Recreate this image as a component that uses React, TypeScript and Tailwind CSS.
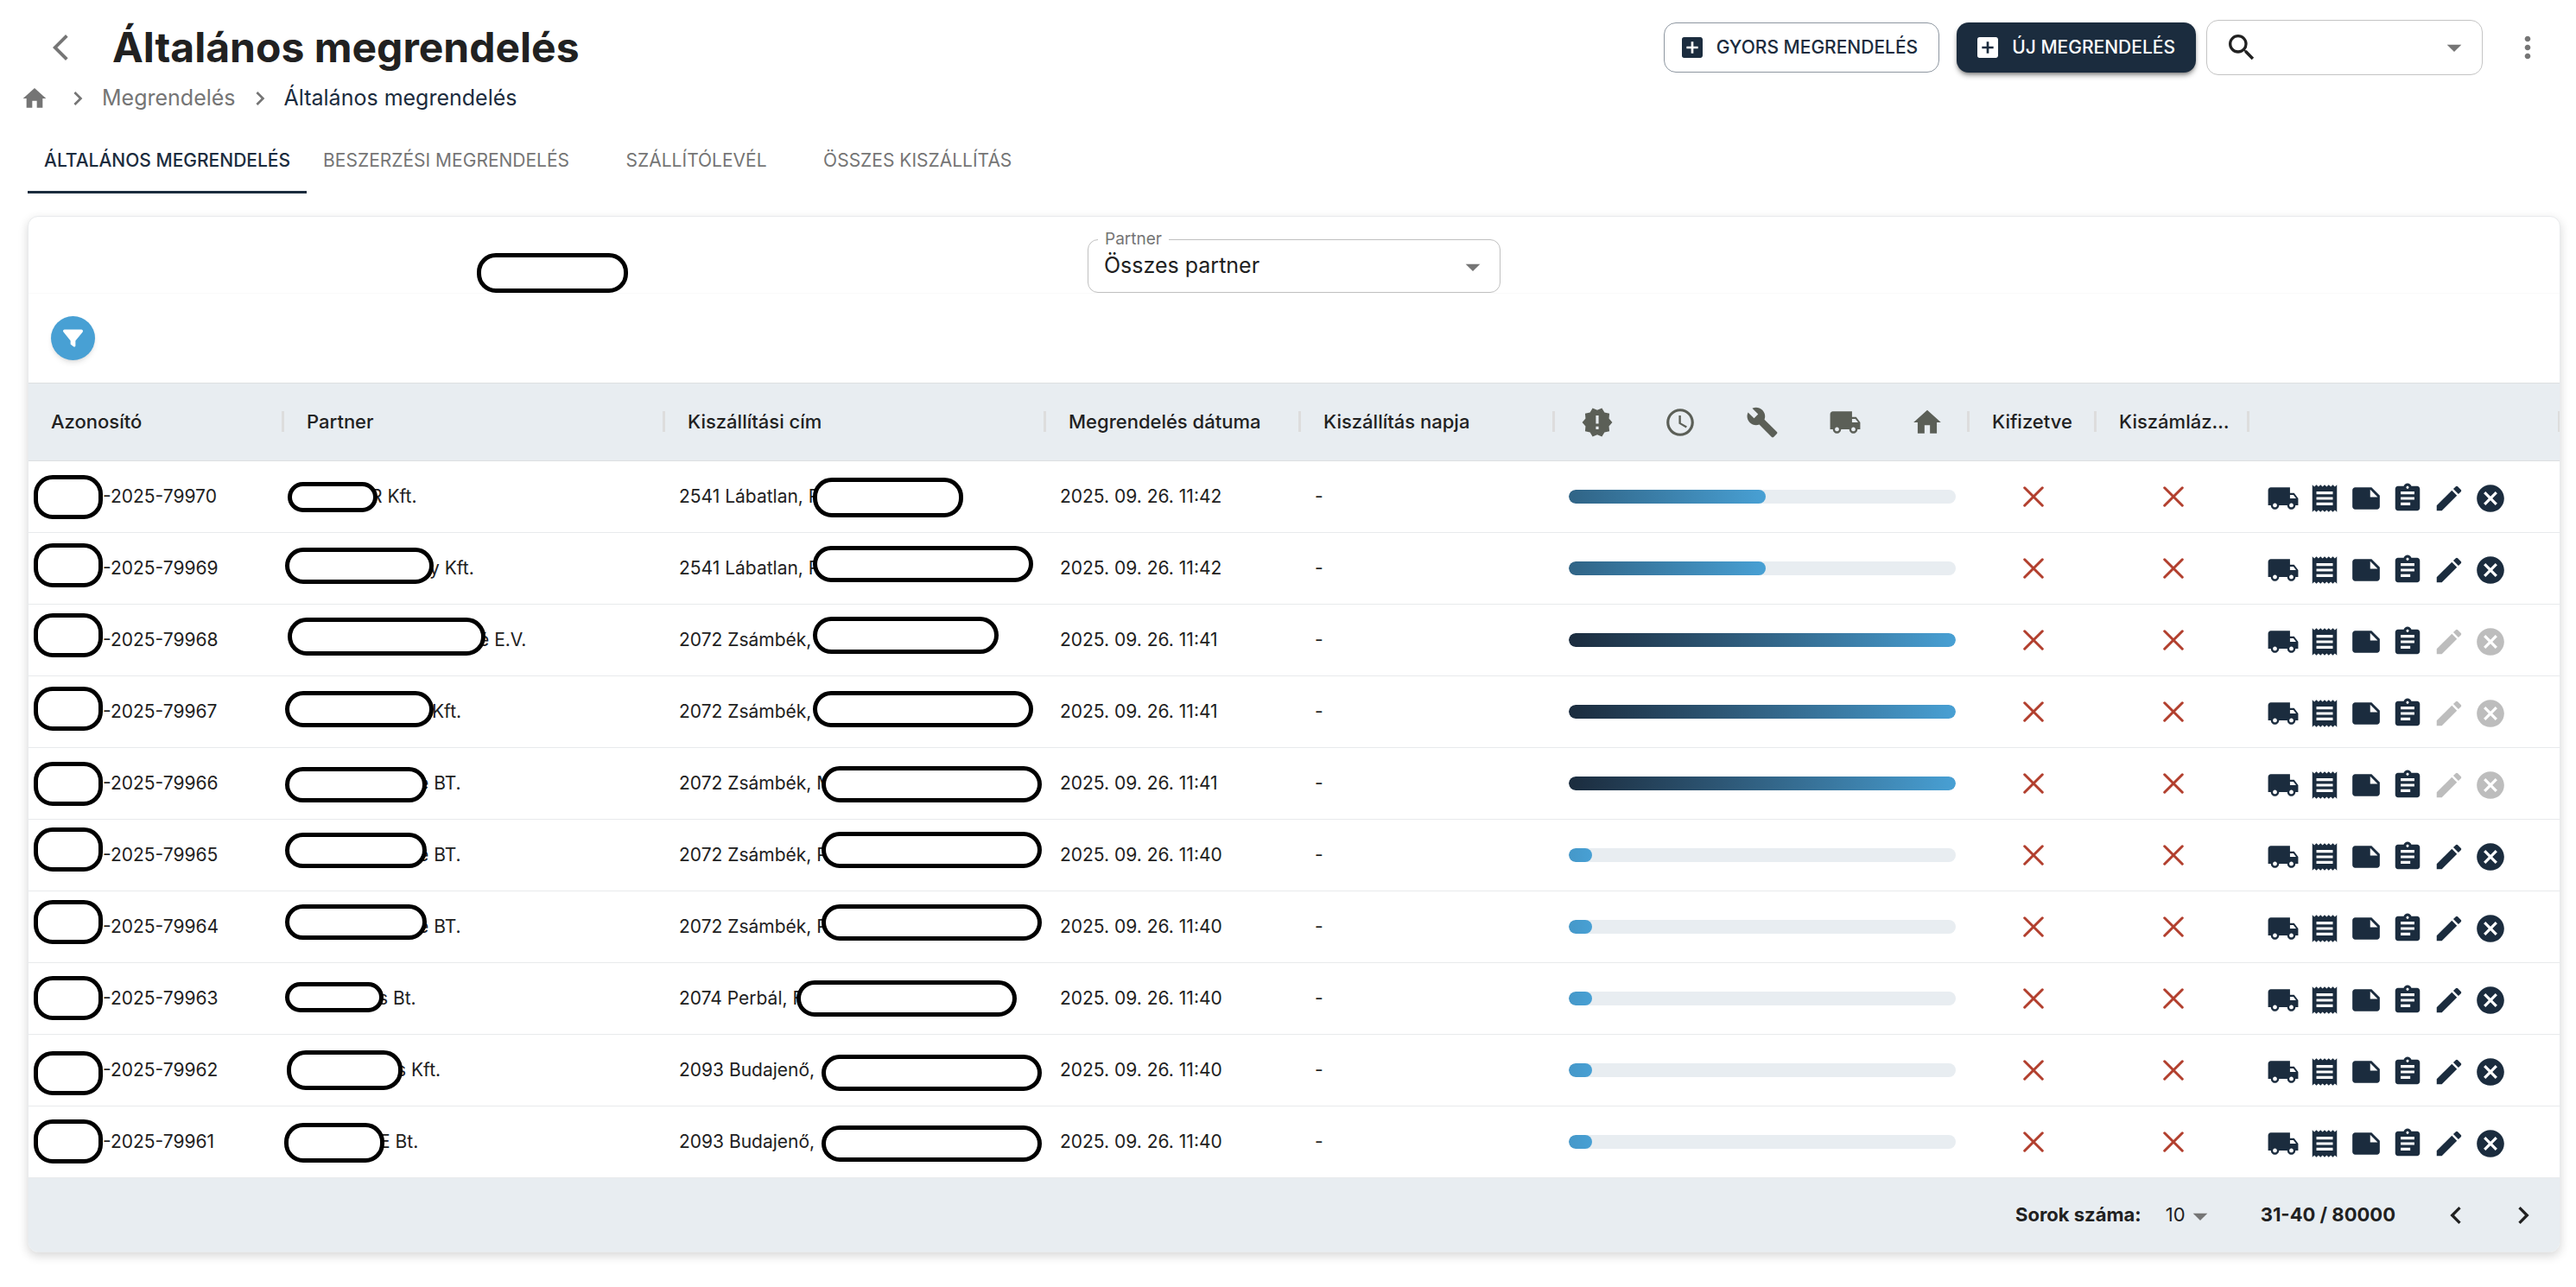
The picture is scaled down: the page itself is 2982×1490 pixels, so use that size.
import React, { useState } from "react";
import {
  MdAccessTime,
  MdAddBox,
  MdArrowBackIosNew,
  MdArrowDropDown,
  MdAssignment,
  MdBuild,
  MdCancel,
  MdChevronLeft,
  MdChevronRight,
  MdEdit,
  MdHome,
  MdLocalShipping,
  MdMoreVert,
  MdNewReleases,
  MdNote,
  MdReceipt,
  MdSearch,
} from "react-icons/md";
import { FaFilter } from "react-icons/fa6";
import clsx from "clsx";

type Mask = { x: number; y: number; w: number; h: number };

type Order = {
  id: string;
  idMaskY: number;
  partner: string;
  partnerX: number;
  partnerMask: Mask;
  address: string;
  addressMask: Mask;
  date: string;
  progress: number;
  locked?: boolean;
};

const ORDERS: Order[] = [
  { id: "-2025-79970", idMaskY: 16, partner: "R Kft.", partnerX: 97, partnerMask: { x: 4, y: 24, w: 104, h: 35 }, address: "2541 Lábatlan, R", addressMask: { x: 171, y: 19, w: 174, h: 46 }, date: "2025. 09. 26. 11:42", progress: 51 },
  { id: "-2025-79969", idMaskY: 12, partner: "y Kft.", partnerX: 165, partnerMask: { x: 1, y: 17, w: 172, h: 42 }, address: "2541 Lábatlan, R", addressMask: { x: 171, y: 15, w: 255, h: 42 }, date: "2025. 09. 26. 11:42", progress: 51 },
  { id: "-2025-79968", idMaskY: 10, partner: "é E.V.", partnerX: 222, partnerMask: { x: 4, y: 15, w: 229, h: 44 }, address: "2072 Zsámbék,", addressMask: { x: 171, y: 14, w: 215, h: 43 }, date: "2025. 09. 26. 11:41", progress: 100, locked: true },
  { id: "-2025-79967", idMaskY: 12, partner: "Kft.", partnerX: 168, partnerMask: { x: 1, y: 17, w: 172, h: 42 }, address: "2072 Zsámbék,", addressMask: { x: 171, y: 17, w: 255, h: 42 }, date: "2025. 09. 26. 11:41", progress: 100, locked: true },
  { id: "-2025-79966", idMaskY: 16, partner: "e BT.", partnerX: 152, partnerMask: { x: 1, y: 22, w: 164, h: 41 }, address: "2072 Zsámbék, M", addressMask: { x: 181, y: 21, w: 255, h: 42 }, date: "2025. 09. 26. 11:41", progress: 100, locked: true },
  { id: "-2025-79965", idMaskY: 9, partner: "e BT.", partnerX: 152, partnerMask: { x: 1, y: 15, w: 164, h: 41 }, address: "2072 Zsámbék, P", addressMask: { x: 181, y: 14, w: 255, h: 42 }, date: "2025. 09. 26. 11:40", progress: 6 },
  { id: "-2025-79964", idMaskY: 10, partner: "e BT.", partnerX: 152, partnerMask: { x: 1, y: 15, w: 164, h: 41 }, address: "2072 Zsámbék, P", addressMask: { x: 181, y: 15, w: 255, h: 42 }, date: "2025. 09. 26. 11:40", progress: 6 },
  { id: "-2025-79963", idMaskY: 15, partner: "s Bt.", partnerX: 106, partnerMask: { x: 1, y: 22, w: 114, h: 35 }, address: "2074 Perbál, F", addressMask: { x: 152, y: 20, w: 255, h: 42 }, date: "2025. 09. 26. 11:40", progress: 6 },
  { id: "-2025-79962", idMaskY: 19, partner: "s Kft.", partnerX: 127, partnerMask: { x: 3, y: 18, w: 134, h: 46 }, address: "2093 Budajenő,", addressMask: { x: 181, y: 23, w: 255, h: 42 }, date: "2025. 09. 26. 11:40", progress: 6 },
  { id: "-2025-79961", idMaskY: 15, partner: "E Bt.", partnerX: 107, partnerMask: { x: 0, y: 19, w: 116, h: 46 }, address: "2093 Budajenő,", addressMask: { x: 181, y: 22, w: 255, h: 42 }, date: "2025. 09. 26. 11:40", progress: 6 },
];

const TABS = ["ÁLTALÁNOS MEGRENDELÉS", "BESZERZÉSI MEGRENDELÉS", "SZÁLLÍTÓLEVÉL", "ÖSSZES KISZÁLLÍTÁS"];

const STATUS_ICONS = [
  { label: "Új", Icon: MdNewReleases },
  { label: "Várakozik", Icon: MdAccessTime },
  { label: "Készül", Icon: MdBuild },
  { label: "Szállítás", Icon: MdLocalShipping },
  { label: "Kiszállítva", Icon: MdHome },
];

// Covers the private part of a cell
function MaskPill({ mask }: { mask: Mask }) {
  return (
    <span
      className="absolute rounded-[22px] border-5 border-black bg-white"
      style={{ left: mask.x, top: mask.y, width: mask.w, height: mask.h }}
    />
  );
}

function HeaderCell({ children }: { children?: React.ReactNode }) {
  return (
    <th scope="col" className="relative border-y border-[#dddfe1] bg-[#e8edf1] px-[26px] text-left text-[22px] font-medium whitespace-nowrap">
      {children}
      <span className="absolute top-8 right-0 h-6 w-[3px] bg-[#dddddd]" />
    </th>
  );
}

function ProgressBar({ value }: { value: number }) {
  return (
    <div role="progressbar" aria-valuenow={value} className="h-4 overflow-hidden rounded-full bg-[#e8edf1]">
      <div
        className={clsx(
          "h-full rounded-full bg-linear-to-r to-[#48a0d4]",
          value === 100 ? "from-[#1b2c3e]" : value > 50 ? "from-[#306486]" : "from-[#4598c9]"
        )}
        style={{ width: `${value}%` }}
      />
    </div>
  );
}

function RedCross() {
  return (
    <svg viewBox="0 0 22 22" className="mx-auto size-6" fill="none" stroke="#b23f2e" strokeWidth="2.8" strokeLinecap="round" aria-label="Nem">
      <path d="M1.6 1.6 20.4 20.4M20.4 1.6 1.6 20.4" />
    </svg>
  );
}

function RowActions({ locked }: { locked?: boolean }) {
  const actions = [
    { label: "Szállítás", Icon: MdLocalShipping },
    { label: "Számla", Icon: MdReceipt },
    { label: "Jegyzet", Icon: MdNote },
    { label: "Feladat", Icon: MdAssignment },
    { label: "Szerkesztés", Icon: MdEdit, off: locked },
    { label: "Törlés", Icon: MdCancel, off: locked },
  ];
  return (
    <div className="flex gap-2.5 pt-1 pl-5">
      {actions.map(({ label, Icon, off }) => (
        <button key={label} aria-label={label} disabled={off} className="text-[#1b2c3e] disabled:text-[#bdbdbd]">
          <Icon className="size-[38px]" />
        </button>
      ))}
    </div>
  );
}

export default function App() {
  const [tab, setTab] = useState(0);

  return (
    <div className="min-h-screen bg-white pr-[18px] pb-10 pl-8 font-['Inter',sans-serif] text-[21px] text-[#212121]">
      <header className="flex items-center pt-[23px]">
        <button aria-label="Vissza" className="ml-5 text-[#757575]">
          <MdArrowBackIosNew className="size-9" />
        </button>
        <h1 className="ml-[42px] text-5xl font-bold">Általános megrendelés</h1>
        <div className="ml-auto flex items-center">
          <button className="flex h-[58px] items-center gap-3 rounded-[14px] border border-[#8d96a0] px-4 pr-6 font-medium text-[#1b2c3e]">
            <MdAddBox className="size-8" />
            GYORS MEGRENDELÉS
          </button>
          <button className="ml-5 flex h-[58px] items-center gap-3 rounded-[14px] bg-[#1b2c3e] px-5 pr-6 font-medium text-white shadow-md shadow-black/40">
            <MdAddBox className="size-8" />
            ÚJ MEGRENDELÉS
          </button>
          <div className="ml-3 flex h-16 w-80 items-center rounded-[14px] border border-[#c4c4c4] px-5">
            <MdSearch className="size-10 shrink-0" />
            <input aria-label="Keresés" className="min-w-0 flex-1 outline-none" />
            <MdArrowDropDown className="-mr-2 size-10 shrink-0 text-[#757575]" />
          </div>
          <button aria-label="Továbbiak" className="mr-[18px] ml-8 text-[#757575]">
            <MdMoreVert className="size-10" />
          </button>
        </div>
      </header>

      <nav aria-label="Útvonal" className="mt-3 -ml-2 flex h-[30px] items-center text-[25px] text-[#757575]">
        <a href="#" aria-label="Kezdőlap">
          <MdHome className="size-8" />
        </a>
        <MdChevronRight className="mr-3 ml-[18px] size-8" />
        <a href="#">Megrendelés</a>
        <MdChevronRight className="mx-3 size-8" />
        <a href="#" className="text-[#1b2c3e]">Általános megrendelés</a>
      </nav>

      <div role="tablist" className="mt-[19px] flex">
        {TABS.map((name, i) => (
          <button
            key={name}
            role="tab"
            aria-selected={i === tab}
            onClick={() => setTab(i)}
            className={clsx(
              "h-[76px] min-w-64 border-b-3 px-[19px] pt-[3px]",
              i === tab ? "border-[#1b2c3e] font-medium text-[#1b2c3e]" : "border-transparent text-[#757575]"
            )}
          >
            {name}
          </button>
        ))}
      </div>

      <main className="mt-[26px] overflow-hidden rounded-xl border border-[#e9ebed] bg-white shadow-[0_4px_12px_rgba(0,0,0,0.16)]">
        <div className="flex items-end gap-[532px] border-b border-[#fafafa] pt-[26px] pl-[519px]">
          <span className="h-[46px] w-[175px] rounded-[22px] border-5 border-black" />
          <div className="relative h-[62px] w-[478px]">
            <label htmlFor="partner" className="absolute -top-3 left-3 bg-white px-2 text-[19px] leading-6 text-[#757575]">
              Partner
            </label>
            <select id="partner" className="size-full appearance-none rounded-xl border border-[#c0c0c0] px-[18px] text-[25px]">
              <option>Összes partner</option>
            </select>
            <MdArrowDropDown className="pointer-events-none absolute top-3 right-3 size-10 text-[#757575]" />
          </div>
        </div>
        <div className="py-[26px] pl-[26px]">
          <button aria-label="Szűrő" className="grid size-[51px] place-items-center rounded-full bg-[#48a0d4] text-white shadow-md">
            <FaFilter className="size-[23px]" />
          </button>
        </div>

        <table className="w-full table-fixed border-separate border-spacing-0">
          <colgroup>
            <col className="w-[296px]" />
            <col className="w-[441px]" />
            <col className="w-[441px]" />
            <col className="w-[295px]" />
            <col className="w-[294px]" />
            <col className="w-[480px]" />
            <col className="w-[147px]" />
            <col className="w-[177px]" />
            <col className="w-[360px]" />
          </colgroup>
          <thead>
            <tr className="h-[91px]">
              <HeaderCell>Azonosító</HeaderCell>
              <HeaderCell>Partner</HeaderCell>
              <HeaderCell>Kiszállítási cím</HeaderCell>
              <HeaderCell>Megrendelés dátuma</HeaderCell>
              <HeaderCell>Kiszállítás napja</HeaderCell>
              <HeaderCell>
                <div className="flex justify-between px-1 text-[#5b5f57]">
                  {STATUS_ICONS.map(({ label, Icon }) => (
                    <Icon key={label} aria-label={label} className="size-[38px]" />
                  ))}
                </div>
              </HeaderCell>
              <HeaderCell>Kifizetve</HeaderCell>
              <HeaderCell>Kiszámláz…</HeaderCell>
              <HeaderCell />
            </tr>
          </thead>
          <tbody>
            {ORDERS.map((o) => (
              <tr key={o.id} className="h-[83px] whitespace-nowrap [&>td]:border-b [&>td]:border-[#e8eaec]">
                <td className="relative pl-[86px]">
                  {o.id}
                  <MaskPill mask={{ x: 6, y: o.idMaskY, w: 80, h: 51 }} />
                </td>
                <td className="relative pl-[3px]">
                  <span style={{ marginLeft: o.partnerX }}>{o.partner}</span>
                  <MaskPill mask={o.partnerMask} />
                </td>
                <td className="relative pl-4">
                  {o.address}
                  <MaskPill mask={o.addressMask} />
                </td>
                <td className="pl-4">{o.date}</td>
                <td className="pl-4">-</td>
                <td className="px-4">
                  <ProgressBar value={o.progress} />
                </td>
                <td>
                  <RedCross />
                </td>
                <td>
                  <RedCross />
                </td>
                <td>
                  <RowActions locked={o.locked} />
                </td>
              </tr>
            ))}
          </tbody>
        </table>

        <footer className="flex h-[85px] items-center justify-end bg-[#e8edf1] pr-[22px] text-[22px]">
          <label htmlFor="rows" className="font-bold">Sorok száma:</label>
          <div className="relative ml-7">
            <select id="rows" className="w-[60px] appearance-none">
              <option>10</option>
            </select>
            <MdArrowDropDown className="pointer-events-none absolute -top-0.5 right-0 size-10 text-[#757575]" />
          </div>
          <span className="ml-[50px] font-bold">31-40 / 80000</span>
          <button aria-label="Előző oldal" className="ml-[50px]">
            <MdChevronLeft className="size-10" />
          </button>
          <button aria-label="Következő oldal" className="ml-[38px]">
            <MdChevronRight className="size-10" />
          </button>
        </footer>
      </main>
    </div>
  );
}
